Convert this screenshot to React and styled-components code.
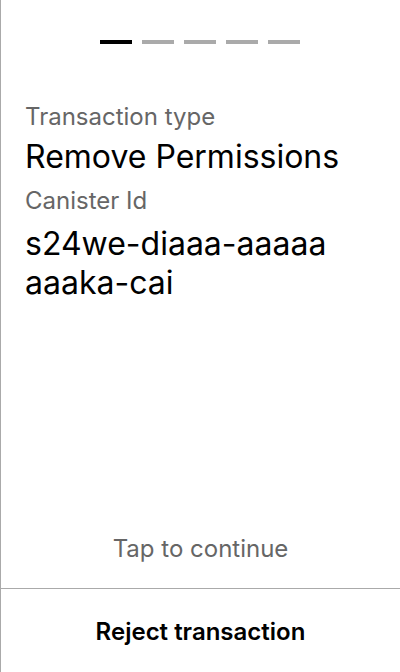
import styled, { createGlobalStyle } from 'styled-components'

const GlobalStyle = createGlobalStyle`
    html, body {
        margin: 0;
        padding: 0;
        background: #fff;
    }
    body {
        font-family: Inter, "Noto Sans", sans-serif;
        -webkit-font-smoothing: antialiased;
    }
`

const Screen = styled.div`
    box-sizing: border-box;
    height: 100vh;
    display: flex;
    flex-direction: column;
    border-left: 1px solid #aaaaaa;
    color: #000;
`

const Body = styled.div`
    flex: 1;
    display: flex;
    flex-direction: column;
    padding: 40px 24px 0;
`

const Steps = styled.div`
    display: flex;
    justify-content: center;
    gap: 10px;
    margin-left: -1px;
`

const Step = styled.div`
    width: 32px;
    height: 4px;
    background: ${p => (p.active ? '#000' : '#aaaaaa')};
`

const Details = styled.div`
    margin-top: 59px;
    display: flex;
    flex-direction: column;
`

const Label = styled.div`
    font-size: 24px;
    line-height: 28px;
    color: #666666;
    margin-top: ${p => (p.first ? '0' : '12px')};
`

const Title = styled.div`
    font-size: 32px;
    line-height: 36px;
    margin-top: 8px;
`

const Value = styled.div`
    font-size: 32px;
    line-height: 39px;
    margin-top: 9px;
    max-width: 350px;
`

const Hint = styled.div`
    margin-top: auto;
    padding-bottom: 25px;
    text-align: center;
    font-size: 24px;
    line-height: 28px;
    color: #666666;
`

const Footer = styled.button`
    border: none;
    border-top: 1px solid #aaaaaa;
    background: none;
    padding: 29px 0 26px;
    font-family: inherit;
    font-size: 24px;
    line-height: 28px;
    font-weight: 600;
    color: #000;
    cursor: pointer;
`

const App = () => {
    const steps = [true, false, false, false, false]
    return (
        <>
            <GlobalStyle />
            <Screen>
                <Body>
                    <Steps>
                        {steps.map((a, i) => <Step key={i} active={a} />)}
                    </Steps>
                    <Details>
                        <Label first>Transaction type</Label>
                        <Title>Remove Permissions</Title>
                        <Label>Canister Id</Label>
                        <Value>s24we-diaaa-aaaaa aaaka-cai</Value>
                    </Details>
                    <Hint>Tap to continue</Hint>
                </Body>
                <Footer>Reject transaction</Footer>
            </Screen>
        </>
    )
}

export default App
